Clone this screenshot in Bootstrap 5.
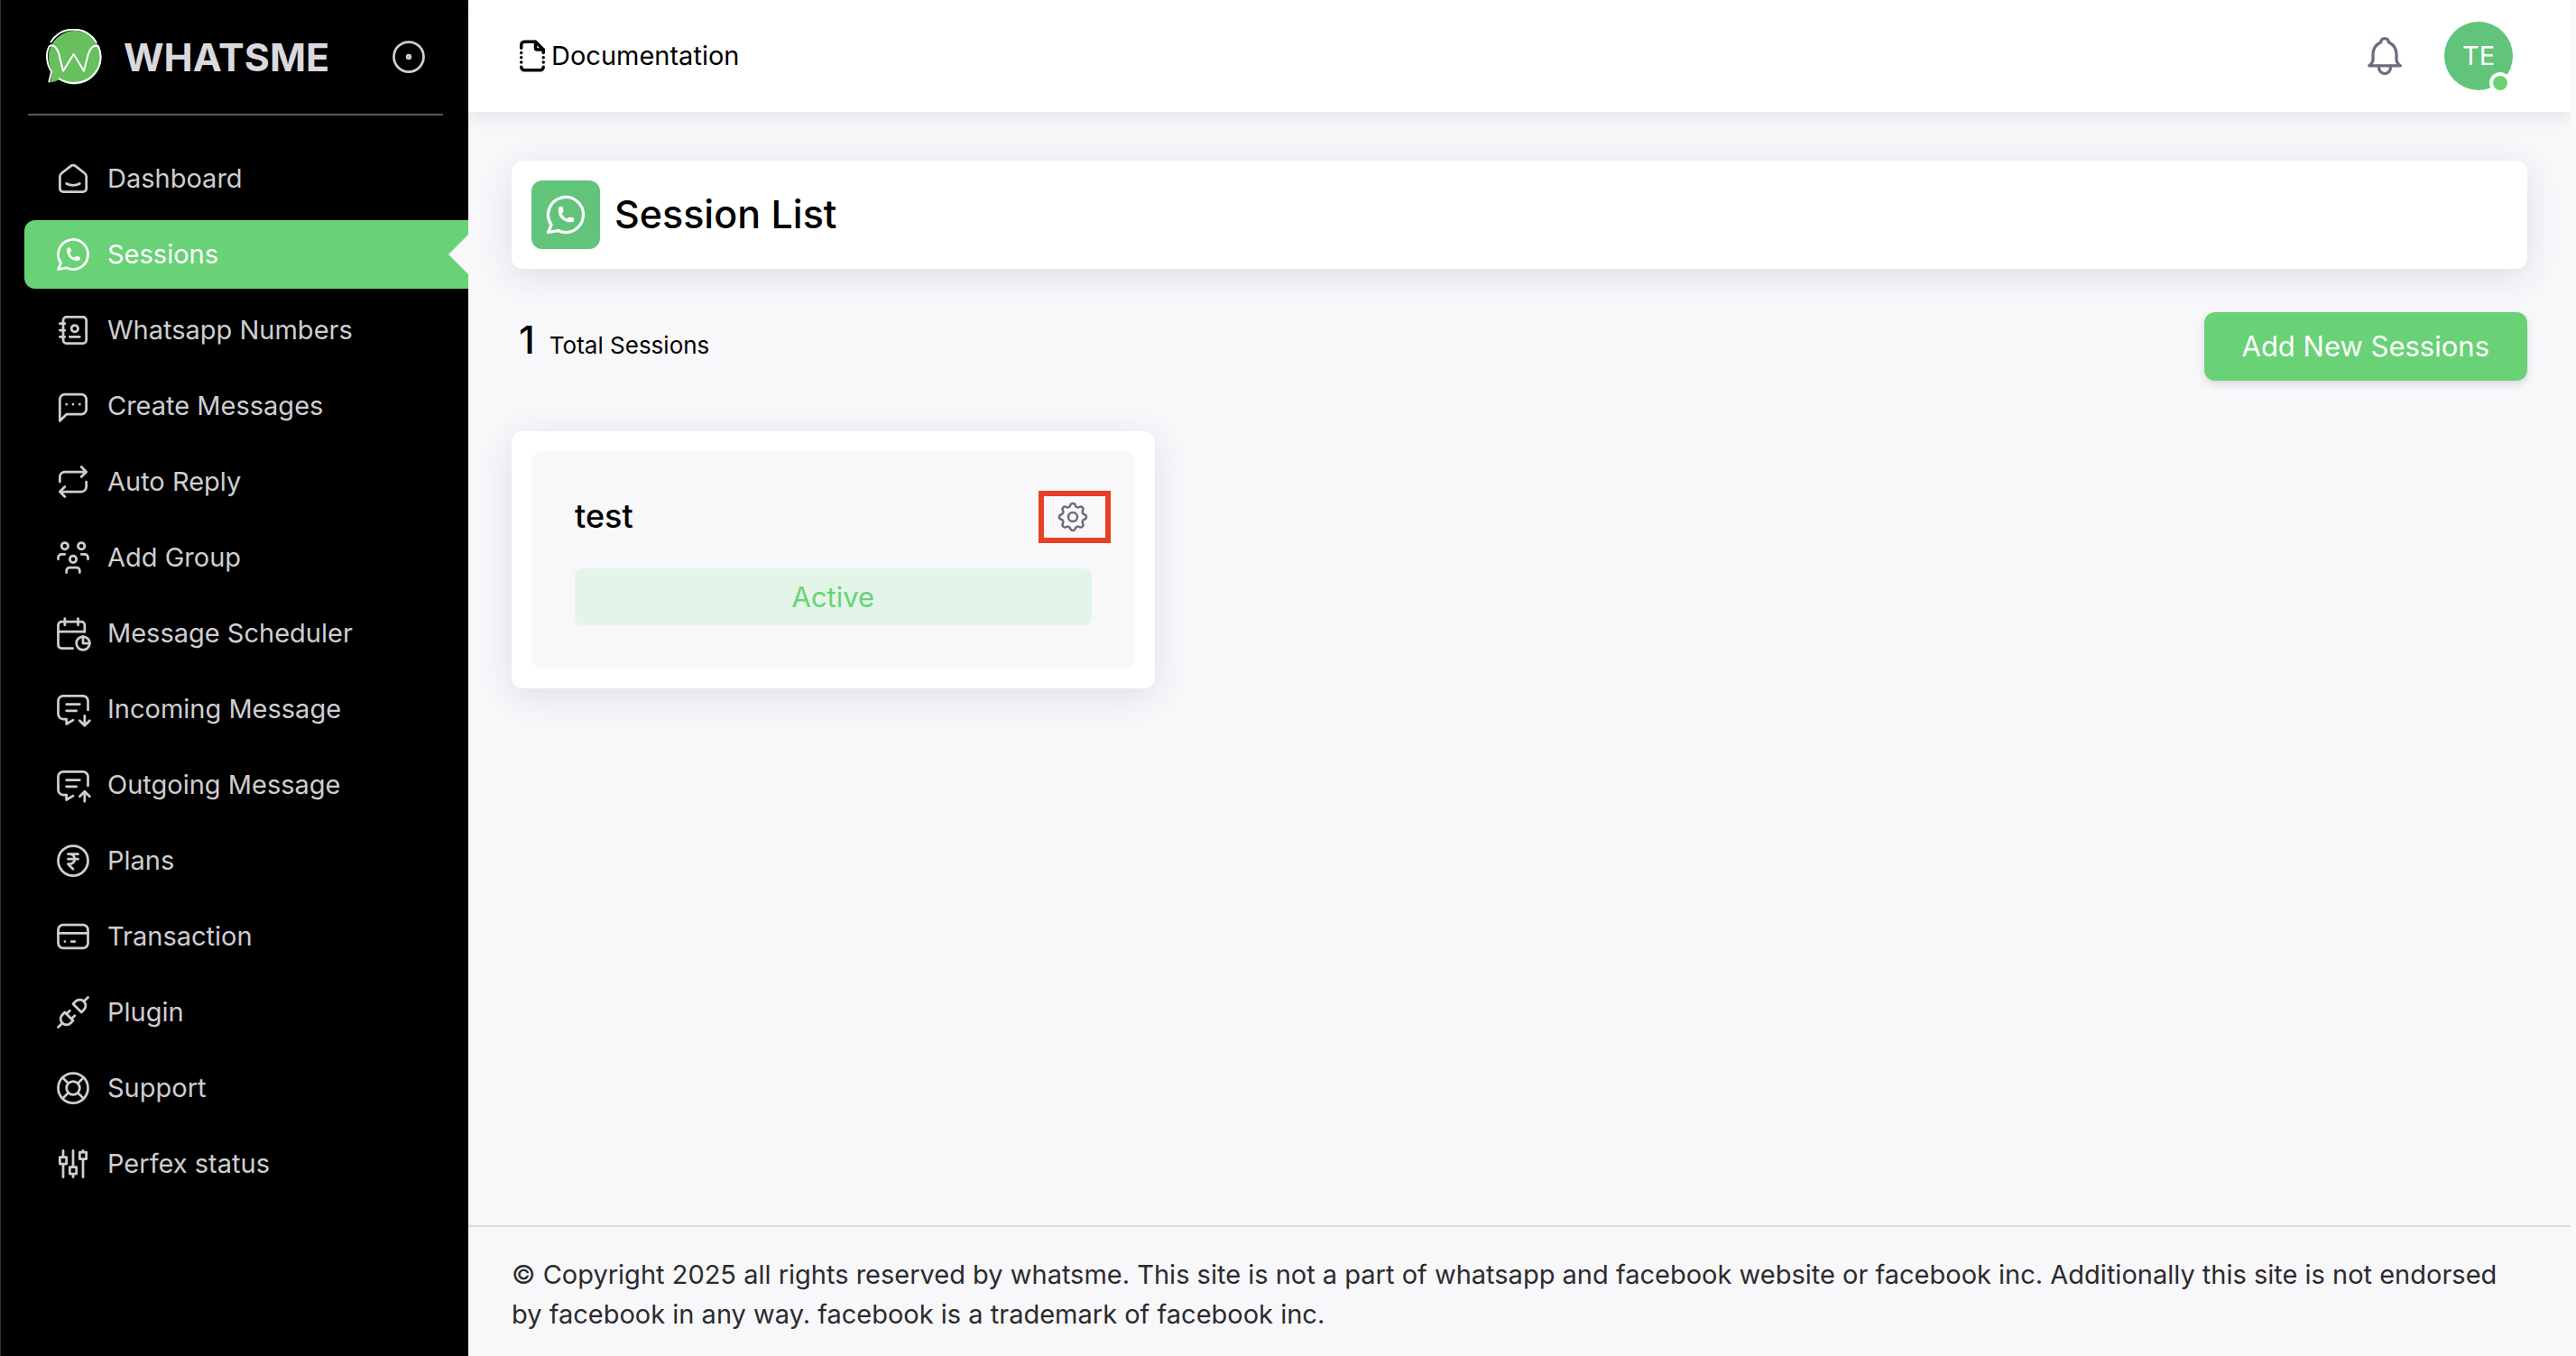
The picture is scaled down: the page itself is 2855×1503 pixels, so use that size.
<!DOCTYPE html>
<html lang="en">
<head>
<meta charset="utf-8">
<meta name="viewport" content="width=device-width, initial-scale=1">
<title>Whatsme - Session List</title>
<link href="https://cdn.jsdelivr.net/npm/bootstrap@5.3.0/dist/css/bootstrap.min.css" rel="stylesheet">
<style>
  :root { --brand: #69d276; --brand-deep: #62c47a; --surface: #f8f7fa; --muted-icon: #6f6b7d; }
  body { font-family: Inter, "Liberation Sans", sans-serif; font-size: 29px; line-height: 44px; color: #000; background: var(--surface); border-left: 1px solid #333; border-right: 6px solid #f9f9f9; }
  svg { fill: none; stroke: currentColor; stroke-width: 1.5; stroke-linecap: round; stroke-linejoin: round; flex: none; }
  a { color: inherit; text-decoration: none; }

  .side { width: 518px; background: #000; color: #cfcdd2; padding-left: 26px; }
  .side-head { margin: 0 28px 32px 4px; padding: 0 16px 0 20px; height: 128px; border-bottom: 2px solid #5a5a5a; }
  .side-head svg.logo { width: 62px; height: 62px; stroke-width: 2; }
  .brand-name { font-size: 43px; font-weight: 700; color: #dbd9de; }
  .pin { width: 44px; height: 44px; color: #cfcdd2; }
  .side .nav { gap: 8px; }
  .side .nav-link { height: 76px; padding: 0 32px; gap: 16px; color: inherit; border-radius: 12px 0 0 12px; position: relative; }
  .side .nav-link svg { width: 44px; height: 44px; }
  .side .nav-link.active { background: var(--brand); color: #fff; }
  .side .nav-link.active::after { content: ""; position: absolute; right: 0; top: 16px; border: solid transparent; border-width: 22px 22px 22px 0; border-right-color: var(--surface); }

  .main-area { border-right: 2px solid #e6e6e6; margin-right: -2px; }
  .topbar { height: 124px; background: #fff; padding: 0 64px 0 50px; box-shadow: 0 4px 18px rgba(47, 43, 61, .1); position: relative; }
  .doc-link svg { width: 42px; height: 42px; stroke-width: 2; }
  .bell { margin-right: 40px; }
  .bell svg { width: 52px; height: 52px; color: var(--muted-icon); }
  .avatar { width: 76px; height: 76px; background: var(--brand-deep); color: #fff; }
  .avatar .dot { position: absolute; right: 2px; bottom: -4px; width: 24px; height: 24px; background: var(--brand); border: 4px solid #fff; border-radius: 50%; }

  .content { padding: 54px 48px; }
  .panel { background: #fff; border-radius: 12px; padding: 22px; box-shadow: 0 8px 36px rgba(47, 43, 100, .12); }
  .title-icon { width: 76px; height: 76px; background: var(--brand-deep); color: #fff; border-radius: 12px; }
  .title-icon svg { width: 52px; height: 52px; }
  .title-text { font-size: 43px; font-weight: 500; }
  .summary { margin: 48px 0 56px; }
  .totals { padding: 0 0 10px 8px; }
  .total-num { font-size: 43px; font-weight: 500; }
  .total-label { font-size: 26px; }
  .btn-brand { height: 76px; padding: 0 42px; font-size: 31px; color: #fff; background: var(--brand); border: 0; border-radius: 12px; box-shadow: 0 4px 8px rgba(47, 43, 61, .14); }
  .btn-brand:hover { color: #fff; background: var(--brand-deep); }
  .session-row { --bs-gutter-x: 48px; --bs-gutter-y: 48px; }
  .session { background: var(--surface); border-radius: 12px; padding: 44px 48px 48px; }
  .session-name { font-size: 36px; font-weight: 500; }
  .gear { width: 80px; height: 58px; border: 6px solid #e84024; background: none; color: var(--muted-icon); margin-right: -21px; padding: 0 4px 0 0; }
  .gear svg { width: 40px; height: 40px; }
  .state { margin-top: 28px; height: 63px; background: #e3f5e9; color: var(--brand); border-radius: 8px; font-size: 31px; }
  footer { border-top: 2px solid #dcdce0; color: #2b2b2e; padding: 31px 48px 24px; }
</style>
</head>
<body>
<div class="d-flex min-vh-100">
  <aside class="side flex-shrink-0">
    <div class="side-head d-flex align-items-center">
      <a href="#" class="d-flex align-items-center gap-4">
        <svg class="logo" viewBox="0 0 62 62" aria-hidden="true">
          <path d="M32 2A29.700 29.700 0 1 1 15 56.300Q10 58.500 5 59.500L7 47A29.700 29.700 0 0 1 32 2Z" fill="#67bf5e" stroke="none"/>
          <path d="M5.500 14.500C17-4 44-4 55.500 14.500" stroke="#fff"/>
          <path d="M3.400 58.500L6.100 47.300C1 40-1 28 3.500 19.500C9 15 14 24 15.500 33L19 46.700L30.600 28L42 46.700L45.500 33C48 21 53 17 58 19.500C62 28 62 42 52 51.500C42 62 25 62 14.700 55.300" stroke="#fff"/>
        </svg>
        <span class="brand-name">WHATSME</span>
      </a>
      <button type="button" class="btn p-0 border-0 ms-auto d-flex" aria-label="Pin menu">
        <svg class="pin" viewBox="0 0 24 24"><circle cx="12" cy="12" r="9"/><circle cx="12" cy="12" r="1"/></svg>
      </button>
    </div>
    <nav class="nav flex-column">
      <a class="nav-link d-flex align-items-center" href="#"><svg viewBox="0 0 24 24"><path d="M19 8.710l-5.333 -4.148a2.666 2.666 0 0 0 -3.274 0l-5.334 4.148a2.665 2.665 0 0 0 -1.029 2.105v7.200a2 2 0 0 0 2 2h12a2 2 0 0 0 2 -2v-7.200c0 -.823 -.38 -1.600 -1.030 -2.105"/><path d="M16 15c-2.210 1.333 -5.792 1.333 -8 0"/></svg>Dashboard</a>
      <a class="nav-link active d-flex align-items-center" href="#" aria-current="page"><svg viewBox="0 0 24 24"><path d="M3 21l1.650 -3.800a9 9 0 1 1 3.400 2.900l-5.050 .9"/><path d="M9 10a.5 .5 0 0 0 1 0v-1a.5 .5 0 0 0 -1 0v1a5 5 0 0 0 5 5h1a.5 .5 0 0 0 0 -1h-1a.5 .5 0 0 0 0 1"/></svg>Sessions</a>
      <a class="nav-link d-flex align-items-center" href="#"><svg viewBox="0 0 24 24"><path d="M20 6v12a2 2 0 0 1 -2 2h-10a2 2 0 0 1 -2 -2v-12a2 2 0 0 1 2 -2h10a2 2 0 0 1 2 2z"/><path d="M10 16h6M4 8h3M4 12h3M4 16h3"/><circle cx="13" cy="11" r="2"/></svg>Whatsapp Numbers</a>
      <a class="nav-link d-flex align-items-center" href="#"><svg viewBox="0 0 24 24"><path d="M4 21v-13a3 3 0 0 1 3 -3h10a3 3 0 0 1 3 3v6a3 3 0 0 1 -3 3h-9l-4 4"/><path d="M12 11v.01M8 11v.01M16 11v.01"/></svg>Create Messages</a>
      <a class="nav-link d-flex align-items-center" href="#"><svg viewBox="0 0 24 24"><path d="M4 12v-3a3 3 0 0 1 3 -3h13m-3 -3l3 3l-3 3"/><path d="M20 12v3a3 3 0 0 1 -3 3h-13m3 3l-3 -3l3 -3"/></svg>Auto Reply</a>
      <a class="nav-link d-flex align-items-center" href="#"><svg viewBox="0 0 24 24"><circle cx="12" cy="13" r="2"/><path d="M8 21v-1a2 2 0 0 1 2 -2h4a2 2 0 0 1 2 2v1"/><circle cx="17" cy="5" r="2"/><path d="M17 10h2a2 2 0 0 1 2 2v1"/><circle cx="7" cy="5" r="2"/><path d="M3 13v-1a2 2 0 0 1 2 -2h2"/></svg>Add Group</a>
      <a class="nav-link d-flex align-items-center" href="#"><svg viewBox="0 0 24 24"><path d="M11.795 21h-6.795a2 2 0 0 1 -2 -2v-12a2 2 0 0 1 2 -2h12a2 2 0 0 1 2 2v4"/><path d="M18 14v4h4"/><circle cx="18" cy="18" r="4"/><path d="M15 3v4M7 3v4M3 11h16"/></svg>Message Scheduler</a>
      <a class="nav-link d-flex align-items-center" href="#"><svg viewBox="0 0 24 24"><path d="M8 9h8M8 13h6"/><path d="M11.998 18.601l-3.998 2.399v-3h-2a3 3 0 0 1 -3 -3v-8a3 3 0 0 1 3 -3h12a3 3 0 0 1 3 3v5.500"/><path d="M19 16v6M22 19l-3 3l-3 -3"/></svg>Incoming Message</a>
      <a class="nav-link d-flex align-items-center" href="#"><svg viewBox="0 0 24 24"><path d="M8 9h8M8 13h6"/><path d="M11.998 18.601l-3.998 2.399v-3h-2a3 3 0 0 1 -3 -3v-8a3 3 0 0 1 3 -3h12a3 3 0 0 1 3 3v5.500"/><path d="M19 22v-6M22 19l-3 -3l-3 3"/></svg>Outgoing Message</a>
      <a class="nav-link d-flex align-items-center" href="#"><svg viewBox="0 0 24 24"><circle cx="12" cy="12" r="9"/><path d="M15 8h-6h1a3 3 0 0 1 0 6h-1l3 3M9 11h6"/></svg>Plans</a>
      <a class="nav-link d-flex align-items-center" href="#"><svg viewBox="0 0 24 24"><rect x="3" y="5" width="18" height="14" rx="3"/><path d="M3 10h18M7 15h.01M11 15h2"/></svg>Transaction</a>
      <a class="nav-link d-flex align-items-center" href="#"><svg viewBox="0 0 24 24"><path d="M7 12l5 5l-1.500 1.500a3.536 3.536 0 1 1 -5 -5l1.500 -1.500zM17 12l-5 -5l1.500 -1.500a3.536 3.536 0 1 1 5 5l-1.500 1.500z"/><path d="M3 21l2.500 -2.500M18.500 5.500l2.500 -2.500M10 11l-2 2M13 14l-2 2"/></svg>Plugin</a>
      <a class="nav-link d-flex align-items-center" href="#"><svg viewBox="0 0 24 24"><circle cx="12" cy="12" r="4"/><circle cx="12" cy="12" r="9"/><path d="M15 15l3.350 3.350M9 15l-3.350 3.350M5.650 5.650l3.350 3.350M18.350 5.650l-3.350 3.350"/></svg>Support</a>
      <a class="nav-link d-flex align-items-center" href="#"><svg viewBox="0 0 24 24"><path d="M4 8h4v4h-4zM6 4v4M6 12v8M10 14h4v4h-4zM12 4v10M12 18v2M16 5h4v4h-4zM18 4v1M18 9v11"/></svg>Perfex status</a>
    </nav>
  </aside>

  <div class="main-area flex-grow-1 d-flex flex-column">
    <header class="topbar d-flex align-items-center">
      <a href="#" class="doc-link d-flex align-items-center">
        <svg viewBox="0 0 24 24"><path d="M14 3v4a1 1 0 0 0 1 1h4"/><path d="M5 7v-2a2 2 0 0 1 2 -2h7l5 5v2"/><path d="M19 19a2 2 0 0 1 -2 2h-10a2 2 0 0 1 -2 -2"/><path d="M5 16v.01M5 13v.01M5 10v.01M19 13v.01M19 16v.01"/></svg>Documentation</a>
      <button type="button" class="bell btn p-0 border-0 d-flex ms-auto" aria-label="Notifications">
        <svg viewBox="0 0 24 24"><path d="M10 5a2 2 0 0 1 4 0a7 7 0 0 1 4 6v3a4 4 0 0 0 2 3h-16a4 4 0 0 0 2 -3v-3a7 7 0 0 1 4 -6"/><path d="M9 17v1a3 3 0 0 0 6 0v-1"/></svg>
      </button>
      <a href="#" class="avatar rounded-circle d-flex align-items-center justify-content-center position-relative">TE<span class="dot"></span></a>
    </header>

    <main class="content flex-grow-1">
      <div class="panel d-flex align-items-center gap-3">
        <span class="title-icon d-flex align-items-center justify-content-center"><svg viewBox="0 0 24 24"><path d="M3 21l1.650 -3.800a9 9 0 1 1 3.400 2.900l-5.050 .9"/><path d="M9 10a.5 .5 0 0 0 1 0v-1a.5 .5 0 0 0 -1 0v1a5 5 0 0 0 5 5h1a.5 .5 0 0 0 0 -1h-1a.5 .5 0 0 0 0 1"/></svg></span>
        <h1 class="title-text m-0">Session List</h1>
      </div>

      <div class="summary d-flex align-items-center justify-content-between">
        <div class="totals d-flex align-items-baseline gap-3">
          <span class="total-num">1</span><span class="total-label">Total Sessions</span>
        </div>
        <button type="button" class="btn btn-brand">Add New Sessions</button>
      </div>

      <div class="row session-row">
        <div class="col-4">
          <div class="panel">
            <div class="session">
              <div class="d-flex align-items-center justify-content-between">
                <h2 class="session-name m-0">test</h2>
                <button type="button" class="gear d-flex align-items-center justify-content-center" aria-label="Session settings">
                  <svg viewBox="0 0 24 24"><path d="M10.325 4.317c.426 -1.756 2.924 -1.756 3.350 0a1.724 1.724 0 0 0 2.573 1.066c1.543 -.94 3.310 .826 2.370 2.370a1.724 1.724 0 0 0 1.065 2.572c1.756 .426 1.756 2.924 0 3.350a1.724 1.724 0 0 0 -1.066 2.573c.94 1.543 -.826 3.310 -2.370 2.370a1.724 1.724 0 0 0 -2.572 1.065c-.426 1.756 -2.924 1.756 -3.350 0a1.724 1.724 0 0 0 -2.573 -1.066c-1.543 .94 -3.310 -.826 -2.370 -2.370a1.724 1.724 0 0 0 -1.065 -2.572c-1.756 -.426 -1.756 -2.924 0 -3.350a1.724 1.724 0 0 0 1.066 -2.573c-.94 -1.543 .826 -3.310 2.370 -2.370c1 .608 2.296 .07 2.572 -1.065z"/><circle cx="12" cy="12" r="3"/></svg>
                </button>
              </div>
              <div class="state d-flex align-items-center justify-content-center">Active</div>
            </div>
          </div>
        </div>
      </div>
    </main>

    <footer>© Copyright 2025 all rights reserved by whatsme. This site is not a part of whatsapp and facebook website or facebook inc. Additionally this site is not endorsed by facebook in any way. facebook is a trademark of facebook inc.</footer>
  </div>
</div>
<script src="https://cdn.jsdelivr.net/npm/bootstrap@5.3.0/dist/js/bootstrap.bundle.min.js"></script>
</body>
</html>
